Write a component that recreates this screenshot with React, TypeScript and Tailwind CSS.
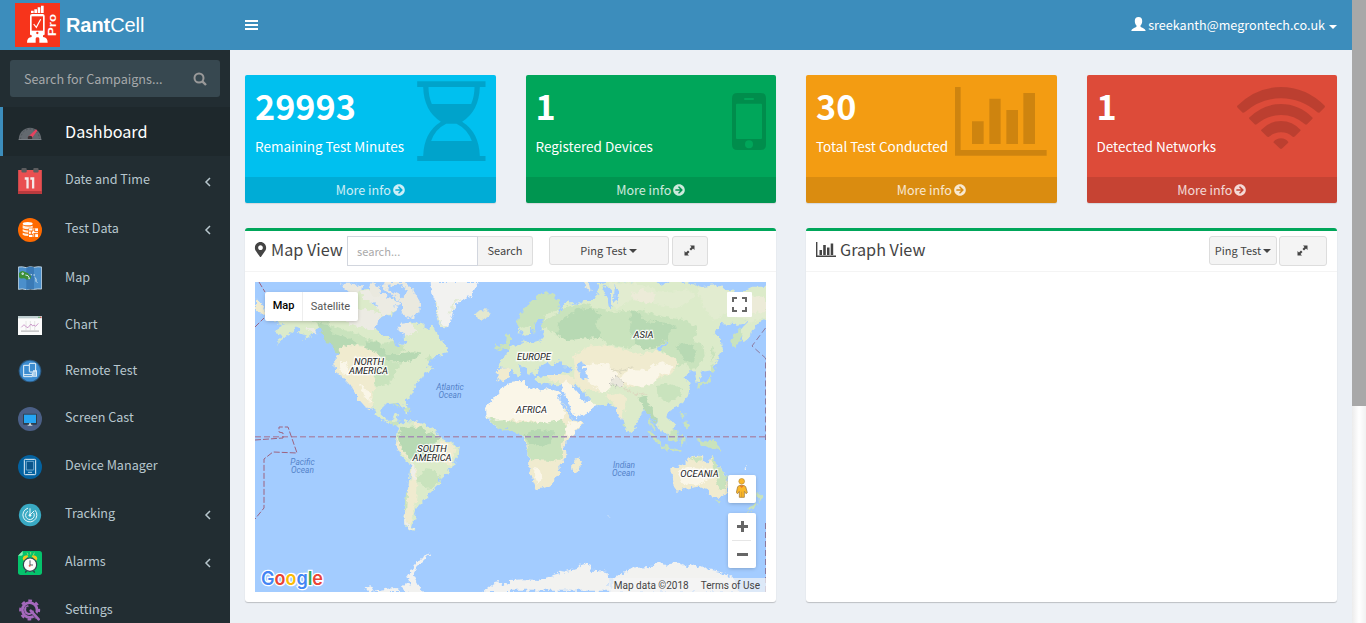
import type { ReactNode } from "react";
import { FaArrowCircleRight, FaMapMarkerAlt } from "react-icons/fa";

const sans = "font-['Noto_Sans_CJK_SC',sans-serif]";

/* ---------- sidebar icons ---------- */

const GaugeIcon = () => (
  <svg width="24" height="14" viewBox="54 384 72 42">
    <path d="M56 422a34 36 0 0 1 68 0z" fill="#63696f" />
    <path d="M62 420a28 30 0 0 1 56 0" fill="none" stroke="#4c5257" strokeWidth="3" strokeDasharray="5 6" />
    <path d="M84 414l24-23 4 4-18 24z" fill="#e8425f" />
    <circle cx="90" cy="417" r="7" fill="#3a3235" />
    <path d="M56 420h68v3h-68z" fill="#7b8086" />
  </svg>
);
const CalendarIcon = () => (
  <svg width="24" height="26" viewBox="54 38 72 79">
    <path d="M54 44h72v73H54z" fill="#e94f51" />
    <path d="M54 108h72v9H54z" fill="#b93a3e" />
    <rect x="64" y="38" width="16" height="14" rx="3" fill="#5d5d5f" />
    <rect x="100" y="38" width="16" height="14" rx="3" fill="#5d5d5f" />
    <path d="M74 66h12v34h-7V74h-5zM91 66h12v34h-7V74h-5z" fill="#f4e8e8" />
  </svg>
);
const DataIcon = () => (
  <svg width="24" height="24" viewBox="54 189 72 72">
    <circle cx="90" cy="225" r="36" fill="#ff6a00" />
    <ellipse cx="83" cy="206" rx="15" ry="5" fill="#fff" />
    <path d="M68 211q14 7 30 1v6H86v5q-12 0-18-3zM68 223q8 4 17 3v7q-12 0-17-4zM68 233q8 4 17 3v7q-12 0-17-4z" fill="#ffeede" />
    <path d="M87 220h27v26H87z" fill="#fff" />
    <path d="M87 228h12v-8M104 220v10h10M87 238h12v8M94 228v10M104 236v10M100 236h14" fill="none" stroke="#ff6a00" strokeWidth="3" />
  </svg>
);
const MapIcon = () => (
  <svg width="24" height="24" viewBox="54 333 72 72">
    <path d="M55 336q12-2 24 2 12-5 23-1 12-3 23-1v66q-12-1-23 1-12-3-23 1-12-4-24-1z" fill="#4b8fcb" stroke="#b9cfdf" strokeWidth="3" />
    <path d="M79 338q12-5 23-1v66q-12-3-23 1z" fill="#3a7ab6" />
    <path d="M57 354q8-9 17-4l10 5q4 8 10 8l-3 9q-6 2-12 2-4-5-10-4-9 2-12-4z" fill="#3d8f37" />
    <path d="M66 354h4v4h-4zM76 360l8 2 5 9h-4M92 358l4 2M100 360h5M104 367l4 4v8l4 4" fill="none" stroke="#d5e7ee" strokeWidth="3" />
  </svg>
);
const ChartIcon = () => (
  <svg width="24" height="19" viewBox="54 483 72 57">
    <path d="M54 483h72v57H54z" fill="#fbfbfb" />
    <path d="M54 483h72v7H54z" fill="#bfced0" />
    <path d="M115 485h4v4h-4z" fill="#58a55a" />
    <path d="M120 485h4v4h-4z" fill="#d95b50" />
    <path d="M78 498v28M91 498v28M104 498v28" stroke="#d9d9d9" strokeWidth="2" />
    <path d="M63 526h54v5H63z" fill="#c9c9cb" />
    <path d="M64 517l8-8 7 7 5 2 9-11 5 6 4-3 5 4 8-9" fill="none" stroke="#c58bc4" strokeWidth="2.5" />
  </svg>
);
const RemoteIcon = () => (
  <svg width="24" height="26" viewBox="54 609 72 78">
    <circle cx="90" cy="648" r="34" fill="#2c5c86" />
    <circle cx="90" cy="648" r="31" fill="#3c8cd0" />
    <g fill="none" stroke="#e9f4fb" strokeWidth="3">
      <path d="M87 631H71v34h26v-12M71 659h26" />
      <rect x="88" y="625" width="19" height="26" rx="2" />
    </g>
    <path d="M99 646h6v-5h3v5h3v19h-12z" fill="#dcecf8" />
    <path d="M102 650v13M106 650v13" stroke="#3c8cd0" strokeWidth="1.5" />
  </svg>
);
const CastIcon = () => (
  <svg width="24" height="24" viewBox="54 51 72 72">
    <circle cx="90" cy="87" r="36" fill="#4b5f86" />
    <rect x="69" y="71" width="42" height="33" rx="3" fill="#2f3d4b" />
    <path d="M72 74h36v25H72z" fill="#25a4f2" />
    <path d="M87 100h6v5h-6zM83 104h14v3H83z" fill="#c9d3d8" />
  </svg>
);
const DeviceIcon = () => (
  <svg width="24" height="24" viewBox="54 195 72 72">
    <circle cx="90" cy="231" r="36" fill="#0462a0" />
    <rect x="73" y="208" width="34" height="46" rx="3" fill="none" stroke="#e8f2f8" strokeWidth="3" />
    <path d="M79 214h22v26H79z" fill="#0b558a" stroke="#7db4d8" strokeWidth="2.5" />
    <path d="M84 247h12" stroke="#a7cbe2" strokeWidth="3" />
  </svg>
);
const RadarIcon = () => (
  <svg width="24" height="24" viewBox="54 339 72 72">
    <circle cx="90" cy="375" r="33.5" fill="#39a9c3" />
    <g fill="none" stroke="#eaf8fb" strokeWidth="3">
      <path d="M90 355v20l12-12" />
      <path d="M84 354.500a21 21 0 1 0 21 6" />
      <path d="M84 364a13 13 0 1 0 17 5" />
    </g>
    <circle cx="90" cy="376" r="4" fill="#eaf8fb" />
  </svg>
);
const AlarmIcon = () => (
  <svg width="24" height="24" viewBox="54 483 72 72">
    <path d="M68 483h50q8 0 8 8v56q0 8-8 8H62q-8 0-8-8v-50z" fill="#05c36c" />
    <path d="M54 497l14-14v10q0 4-4 4z" fill="#8df0b4" />
    <path d="M81 488l3 7M92 486v8M103 488l-3 7" stroke="#9be36d" strokeWidth="2.500" />
    <path d="M68 506q2-10 14-10l3 3-14 13zM112 506q-2-10-14-10l-3 3 14 13z" fill="#f7c41e" />
    <path d="M80 541l-4 7M100 541l4 7" stroke="#2f3e4a" strokeWidth="4" />
    <circle cx="90" cy="524" r="20" fill="#fafafa" stroke="#33424e" strokeWidth="3.500" />
    <path d="M90 511v14h9" fill="none" stroke="#33424e" strokeWidth="2.500" />
    <circle cx="89" cy="527" r="3" fill="#e05a4a" />
  </svg>
);
const GearIcon = () => (
  <svg width="24" height="24" viewBox="54 628 72 72">
    <circle cx="89" cy="661" r="22" fill="none" stroke="#a569bd" strokeWidth="8" />
    <circle cx="89" cy="661" r="28" fill="none" stroke="#a569bd" strokeWidth="7" strokeDasharray="11 11" strokeDashoffset="5" />
    <path d="M92 661l28 30" stroke="#222d32" strokeWidth="13" />
    <path d="M92 663l24 26" stroke="#a569bd" strokeWidth="8" strokeLinecap="round" />
    <path d="M85 649a12 12 0 1 0 14 14" fill="none" stroke="#a569bd" strokeWidth="6" />
    <path d="M87 660l-7-8" stroke="#222d32" strokeWidth="4" />
  </svg>
);

/* ---------- small glyphs ---------- */

const Caret = () => <span className="inline-block border-x-4 border-t-4 border-x-transparent border-t-current" />;

const AngleLeft = () => (
  <svg width="7" height="10" viewBox="0 0 7 10" className="absolute top-1/2 left-[204px] -mt-[4px]">
    <path d="M6 1L2 5l4 4" fill="none" stroke="#b8c7ce" strokeWidth="1.500" />
  </svg>
);

const ExpandIcon = () => (
  <svg width="11" height="11" viewBox="0 0 11 11" fill="currentColor">
    <path d="M6 .5h4.500V5L9 3.500 7 5.500 5.500 4 7.500 2z" />
    <path d="M5 10.500H.5V6L2 7.500l2-2L5.500 7l-2 2z" />
  </svg>
);

const Logo = () => (
  <svg width="45" height="44" viewBox="45 9 135 132">
    <path d="M45 9h135v132H45z" fill="#f7341b" />
    <g fill="#fff">
      <path d="M93 32h8v7h-8zM103 28h8v11h-8zM113 22h8v17h-8zM123 17h8v22h-8z" />
      <path d="M96 42h32q6 0 6 6v55q0 3-5 3v5q14 1 14 17H118v-12q0-4-5.500-4t-5.500 4v12H81q0-16 14-17v-5q-5 0-5-3V48q0-6 6-6z" />
    </g>
    <path d="M95 49h34v43H95z" fill="#f7341b" />
    <circle cx="112" cy="99" r="3.500" fill="#f7341b" />
    <path d="M101 72l8 10 13-24" fill="none" stroke="#fff" strokeWidth="3.500" />
    <text transform="translate(167 108) rotate(-90)" fontSize="34" fontWeight="700" fill="#fff" textLength="66" lengthAdjust="spacingAndGlyphs" fontFamily="Liberation Sans, sans-serif">Pro</text>
  </svg>
);

/* ---------- sidebar ---------- */

type Item = { label: string; icon: ReactNode; height: string; nudge: string; lift: string; arrow?: boolean };

const items: Item[] = [
  { label: "Date and Time", icon: <CalendarIcon />, height: "h-[49px]", nudge: "mt-[1px]", lift: "-mt-[3px]", arrow: true },
  { label: "Test Data", icon: <DataIcon />, height: "h-12", nudge: "mt-[2px]", lift: "-mt-[3px]", arrow: true },
  { label: "Map", icon: <MapIcon />, height: "h-12", nudge: "mt-[2px]", lift: "-mt-px" },
  { label: "Chart", icon: <ChartIcon />, height: "h-[46px]", nudge: "mt-[3px]", lift: "-mt-px" },
  { label: "Remote Test", icon: <RemoteIcon />, height: "h-[47px]", nudge: "mt-[1px]", lift: "-mt-px" },
  { label: "Screen Cast", icon: <CastIcon />, height: "h-12", nudge: "mt-[2px]", lift: "-mt-[3px]" },
  { label: "Device Manager", icon: <DeviceIcon />, height: "h-12", nudge: "mt-[2px]", lift: "-mt-[3px]" },
  { label: "Tracking", icon: <RadarIcon />, height: "h-12", nudge: "mt-[2px]", lift: "-mt-[3px]", arrow: true },
  { label: "Alarms", icon: <AlarmIcon />, height: "h-12", nudge: "mt-[2px]", lift: "-mt-[3px]", arrow: true },
  { label: "Settings", icon: <GearIcon />, height: "h-12", nudge: "mt-[2px]", lift: "-mt-[3px]" },
];

function Sidebar() {
  return (
    <aside className="w-[230px] shrink-0 bg-[#222d32] text-[#b8c7ce]">
      <div className="mx-[10px] mt-[10px] mb-[10px] flex h-[37px] items-center justify-between rounded-[3px] bg-[#374850] pr-[13px] pl-[14px] text-[#a6a9ab]">
        <span className="text-[12.600px] leading-5">Search for Campaigns...</span>
        <svg width="14" height="14" viewBox="0 0 14 14" fill="none" stroke="#999" strokeWidth="2">
          <circle cx="6" cy="6" r="4.500" />
          <path d="M9.300 9.300L13 13" strokeWidth="2.400" />
        </svg>
      </div>
      <div className="flex h-[49px] items-center border-l-[3px] border-[#3c8dbc] bg-[#1e282c] pl-[15px] text-white">
        <span className="mt-[4px] w-[47px]"><GaugeIcon /></span>
        <span className="-mt-[2px] text-[16.200px] leading-6">Dashboard</span>
      </div>
      {items.map((it) => (
        <div key={it.label} className={`relative flex items-center pl-[18px] ${it.height}`}>
          <span className={`w-[47px] ${it.nudge}`}>{it.icon}</span>
          <span className={`text-[12.600px] leading-5 ${it.lift}`}>{it.label}</span>
          {it.arrow && <AngleLeft />}
        </div>
      ))}
    </aside>
  );
}

/* ---------- stat boxes ---------- */

const Hourglass = () => (
  <svg width="69" height="81" viewBox="531 48 206 243" className="absolute top-[6px] right-[10px]" fill="#000" fillOpacity=".15">
    <path fillRule="evenodd" d="M531 49h205v17h-17q-2 72-53 104 51 32 53 103h17v15H531v-15h18q2-71 53-103-51-32-53-104h-18zM565 66q0 27 10 51h118q10-24 10-51zM573 228h122q-13-36-46-52h-31q-33 16-45 52z" />
  </svg>
);
const Phone = () => (
  <svg width="34" height="57" viewBox="636 84 102 171" className="absolute top-[18px] right-[10px]" fill="#000" fillOpacity=".15">
    <path fillRule="evenodd" d="M652 84h70q16 0 16 16v139q0 16-16 16h-70q-16 0-16-16V100q0-16 16-16zM675 99q-3 0-3 3t3 3h24q3 0 3-3t-3-3zM651 116q-3 0-3 3v100q0 3 3 3h72q3 0 3-3V119q0-3-3-3zM687 226a12 12 0 1 0 0 24 12 12 0 1 0 0-24z" />
  </svg>
);
const Bars = () => (
  <svg width="92" height="69" viewBox="465 66 276 207" className="absolute top-[12px] right-[10px]" fill="#000" fillOpacity=".15">
    <path d="M465 66h17v189h258v17H465zM516 169h35v68h-35zM568 101h34v136h-34zM619 135h35v102h-35zM670 84h35v153h-35z" />
  </svg>
);
const Wifi = () => (
  <svg width="88" height="62" viewBox="472 261 264 186" className="absolute top-[12px] right-[12px]" fill="#000" fillOpacity=".15">
    <path d="M472 318q57-57 132-57t132 57q0 3-2 5l-15 15q-3 1-6-1-49-42-109-42t-109 42q-3 2-6 1l-15-15q-2-2-2-5z" />
    <path d="M508 353q42-41 96-41t95 41q0 3-2 5l-15 15q-3 2-6 0-32-28-72-28t-73 28q-3 2-6 0l-15-15q-2-2-2-5z" />
    <path d="M544 390q25-27 60-27t59 27q0 2-2 4l-15 15q-4 3-7 1-15-13-35-13t-36 13q-3 2-7-1l-15-15q-2-2-2-4z" />
    <path d="M581 426q9-11 23-11t22 11q0 2-2 4l-16 15q-4 4-8 0l-16-15q-2-2-3-4z" />
  </svg>
);

const stats = [
  { value: "29993", label: "Remaining Test Minutes", bg: "bg-[#00c0ef]", art: <Hourglass /> },
  { value: "1", label: "Registered Devices", bg: "bg-[#00a65a]", art: <Phone /> },
  { value: "30", label: "Total Test Conducted", bg: "bg-[#f39c12]", art: <Bars /> },
  { value: "1", label: "Detected Networks", bg: "bg-[#dd4b39]", art: <Wifi /> },
];

function Stats() {
  return (
    <div className="grid grid-cols-4">
      {stats.map((s) => (
        <div key={s.label} className="px-[15px]">
          <div className={`relative flex h-32 flex-col overflow-hidden rounded-[2px] text-white shadow-[0_1px_1px_rgba(0,0,0,0.1)] ${s.bg}`}>
            {s.art}
            <div className="relative flex-1 px-[10px]">
              <div className="pt-[9px] text-[34.200px] leading-[42px] font-bold">{s.value}</div>
              <div className="mt-[10px] text-[13.500px] leading-5">{s.label}</div>
            </div>
            <div className="flex h-[26px] items-center justify-center gap-[2px] bg-black/10 text-white/80">
              <span className="text-[12.600px] leading-5">More info</span>
              <FaArrowCircleRight size={12} />
            </div>
          </div>
        </div>
      ))}
    </div>
  );
}

/* ---------- world map ---------- */

const land = "#dcebca";
const sand = "#f0ebcf";
const pale = "#faf6e8";
const forest = "#b7d9b3";
const green = "#c9e3bd";
const ice = "#f2f2f0";

function WorldMap() {
  return (
    <svg width="511" height="310" viewBox="0 0 511 310" className="block bg-[#a3ccff]">
      <defs>
        {/* roughens the coastlines and vegetation edges */}
        <filter id="coast" filterUnits="userSpaceOnUse" x="0" y="0" width="511" height="310">
          <feTurbulence type="fractalNoise" baseFrequency="0.2" numOctaves="3" seed="4" result="noise" />
          <feDisplacementMap in="SourceGraphic" in2="noise" scale="7" xChannelSelector="R" yChannelSelector="G" />
        </filter>
      </defs>
      <g filter="url(#coast)">
      {/* western hemisphere */}
      <g transform="translate(-5 -4) scale(.33333)">
        <path d="M15 62l22 18 8 24-10 8-20-14z" fill={sand} />
        <path d="M72 132l20-24 60-20 90-10 60-34 60-14 40 40 30-10 8 40-20 14 6 22-10 20 8 18 20 8 14 22 8-4-2-32 12-10-4-24 40 0 14 14 8 6 12-14 12 24 12 20 18 16 8 24-38 12-20 8-10 16 14 4 8 10-26 14-22 30-10 14-2 12-22 22 4 26 4 14-6 2-12-28-22-4-28 2-14 14 2 22 12 14 16 0 8-18 16-2-8 20 4 10 16 2 4 20 16 10 10-2 8 6-6 6-16-6-18-14-22-20-34-10-22-20-10-22-22-34-16-22 2 14 22 38 4 10-18-20-20-38-18-28 0-52 4-20-20-20-10-28-14-16-16-14-22 0-16-8-18 12-16 16-14 8 6-16-20-8-6-14z" fill={land} />
        <path d="M178 140l20-20 30-2 14 24 40 14 38 10 30 18 46 10 44-2 30 22-30 16-20 20-16 24-10 22-22-14-6-30 0-44-60-10-36-28-14 18-16-4-20-40-32-14z" fill={green} />
        <path d="M200 130l30 8 20 30 42 10 34 20-40 6-22 30-16-30-20-12-20-40zM350 190l38 6 24 32 46 0 28-8 34 4-36 24-30 6-32-6-44-16-38-14z" fill={forest} />
        <path d="M290 200l50 6 44 20 16 30-18 30-10 50-8 24 4 36-22-10-20-22-24-40-24-26-22-10-4-44 14-16 4-16z" fill={sand} />
        <path d="M270 252l16 0 12 34-8 12-14-16zM330 320l18 14 14 20-4 18-18-18z" fill={pale} />
        <path d="M380 250l44 0 30 8-20 30-20 30-34 6-10-30z" fill={green} />
        <path d="M290 100l60-8 40 14 6 30-10 20-50-6-38-10-20-20zM330 40l50-10 30 26 40 14-10 24-40 24-30-44-30-10zM450 140l30-4 18 24-30 14-20-14z" fill="#ecebe3" />
        <path d="M404 12l60 0 26 24 20 36-2 32-20 16-36-12 6-20-14-26-26-14-20-18zM365 12l24 14 2 26-20 6-14-30zM270 14l40 0 20 20-6 14-40-10zM325 22l14 0-2 16-14 0z" fill="#eae9df" />
        <path d="M284 108l10-10 16 6-4 14-16 6zM256 84l20-6 10 6-20 12zM410 24l16 20 30 14 18-16-20-24M430 84l18 8 18-4M366 70l12 14 10-4M390 30l10 24M348 112l12-10" fill="#a3ccff" />
        <path d="M376 150q6-30 30-38l16-4 14 22 0 32 16 16-2 28-14-2-8-22-20-10-24-6z" fill="#a3ccff" />
        <path d="M542 12h144l-20 40-32 16-16 14-10 26-14 44-14-6-14-22-8-20 0-32-10-22z" fill={ice} />
        <path d="M556 76l8 12-4 22 10 28 18 12M598 110l14-36 20-12" fill="none" stroke="#e2ebd6" strokeWidth="6" />
        <path d="M678 106l12-10 24 2 8 12-22 14-16-4z" fill="#e3e8cf" />
        <path d="M528 242l16-14 8 16-14 4zM420 376l20 4 20 10-18-4zM462 392l20 0 2 6-18 0z" fill={green} />
        <path d="M74 160l40-24 38 0-22 24-28 20-22 18 16-24z" fill={land} />
        <path d="M165 150l30 0 10 20-12-4-12-8z" fill="#ecebe3" />
        <path d="M450 442L464 430 486 430 516 434 530 446 562 460 572 476 602 494 630 506 624 528 614 544 606 572 590 585 570 600 566 620 545 640 532 655 522 665 508 680 497 692 492 708 497 716 486 734 484 744 499 758 480 757 464 740 460 715 468 700 466 670 476 620 481 562 460 545 448 520 438 492 443 465z" fill={land} />
        <path d="M452 446l30 4 30-6 20 18 34 14-12 26-10 50-26-6-20-4-18 2-16-22-16-14-4-30z" fill={forest} />
        <path d="M500 600l24-26 34 2 14 26-20 24-22 4-16-6z" fill={green} />
        <path d="M574 486l44 20-6 26-10 30-22-10-10-36zM484 560l16 10 2 60-4 44-10 26-4 32-14 8-8-24 8-46 8-60zM442 480l12 30 22 30-6 4-26-32-6-18zM495 430l18 4-6 12-12-4z" fill={sand} />
        <path d="M480 556l16 12 2 34-10 4zM463 710l8 26 20 18-10 2-18-20z" fill="#efeee9" />
        <path d="M468 640l6 0-2 60-6 0z" fill={green} />
        <path d="M440 428l10-2-4 12-16 4-14-12 4-2 12 6z" fill={green} />
        <path d="M780 166l-12 4-2 24-28 26 24-6 18-6zM742 196l-10 20 18-6z" fill={green} />
        <path d="M780 270l-36 2-2 34 20 4 18-10z" fill={sand} />
        <path d="M780 314l-24 16-28 34-20 26 2 30 24 22 46 10z" fill={pale} />
        <path d="M710 416l24 12 46-2v28l-24 0-26-16z" fill={green} />
        <path d="M544 826l-20 18-20 20-14 24 10 20 20 36h-50l-14-14 8-14 18 4-8-30 16-24 28-32zM344 930l20-6 10 18-20 2zM376 936l60-6 20 12h-80zM700 942l32-26 20-4 4 12 24-10v28z" fill={ice} />
      </g>
      {/* eastern hemisphere */}
      <g transform="translate(255 -4) scale(.33333)">
        <path d="M0 208l20-8 22-4-4-16 10 14 22 2 20-6 12-14-4-20-24 6 6-24 10-20-10-10-20 30 0 30-12 6-18-12-6-8 0-26 22-24 30-34 26-10 30 14 16 20-10 18 16-6 10-30 20-4 12 10 28-16 30 0 12-22 0-24 24-10 80 0 66-4 20 18 40-20 60 16 50 18 30-10 50 18 40-20 60 0v90l-36 16-20 22-8 20-20 18-10-20 6-24 16-16-36 6-44-2-20 30 18 14 4 36-30 60-34 6-2 30-10 4-6-36-16 0-16 22 20 12-10 46-30 26-24 12-6 20 24 22-8 26-28 2-14-20-4-12-14-20-22-26-12 18-34 60-22-38-8-24-20-22-18-4-26 2-16 0-20-16-10-30-22-14-14-14-26 4-10 10-26-2-42-6 0-16 28-4 46-10-22-20-22-8-24 10-10 28-20-8-16-20-14-4 8 24-12 14-18-26-40-8z" fill={land} />
        <path d="M22 126l30-46 34-30 24-8 28 14 14 20-8 20-34 12-20 30-12 30-14-14-6-14-20 12-16-6z" fill={green} />
        <path d="M120 120l50-34 60-10 20 14 60 12 80-6 70 20 60 10 40 20-10 40-26 22 4 48-28 14-30-34-14-22-24-16-40-10-34 22-60-10-36-28-20-4-60 6-60-14-44-16-36-2z" fill={green} />
        <path d="M150 130l50-34 44-4 30 20-16 26 14 20 0 18-60 6-36 4-36-14zM362 96l26 8 20 26 60 4 30 10-20 20-10 22-30 22-36 6-34-30-10-26 4-26z" fill={forest} />
        <path d="M486 196l60-8 34 10 4 36-22 30-14 18-26-30-26-14-20-20zM440 322l40-6 34 14-4 26-34 18-34-20z" fill={green} />
        <path d="M496 202l40-4 24 20-10 30-20 6zM384 360l24-8 10 30 14 30 10 34-14-20-18-26-16-20z" fill={forest} />
        <path d="M300 16l80 0 60 16-20 46-60-14-40 30-30-40zM400 30l70 14 60-10 30 20-60 40-50-12-60-20zM560 30l60-10 60 30 88 10v60l-50 14-60-26-50 14-30-40z" fill="#e2ecd0" />
        <path d="M362 44l40-8 34 14-10 26-50-6zM706 66l50-14 12 10v40l-40 4z" fill="#ecebd8" />
        <path d="M190 234l40-28 56-4 60 14 40 14 50-12 52 20 20 18-22 30-46 16-30 22-60 4-40-20-30 24-10 14-30-14-20 6-20-20-8-24 2-30z" fill={sand} />
        <path d="M216 262l40-6 40 6 30 30-22 26 2 16-24 10-28-20-30-20z" fill={pale} />
        <path d="M330 292l34-20 40 4 50-26 38 14-10 18-40 12-10 22-40 10-40-8-24-14z" fill={pale} />
        <path d="M112 288l30 0 40 6 16 16-4 18-36-14-36-4zM284 350l40-6 24 14-2 24-12 50-18-40-8-30-20-4z" fill={sand} />
        <path d="M306 300l18-2 14 14-6 20-20-8-10-14z" fill="#e9e7dc" stroke="#aaa" strokeWidth="2" strokeDasharray="5 4" />
        <path d="M340 330l40 20 30-6M300 274l30 6 40-14" fill="none" stroke="#dcd9c0" strokeWidth="4" />
        <path d="M118 274l12-20 22-4 4 14 22 2 6 14-40 8-20-4zM204 256l14-6 6 12-6 8 12 12 0 24-16 2-4-20-8-20zM440 214l22-18 6-8 2 6-20 24zM286 20l20 20 0 40-8 16-6-34-12-26zM314 20l12 14-6 40-8-4M84 120l-8 16 0 36 10 6 6-12 0-30 6-16z" fill="#a3ccff" />
        <path d="M224 12l12 0 6 30-8-4-14-20z" fill="#e7ead8" />
        <path d="M664 184l20-30 12 6-6 28-16 26-8-12z" fill={green} />
        <path d="M604 204l10 20-8 30-4-14zM604 262l18 12-16 10-6-12zM602 288l4 20-12 10-36 12 2-8 26-10 14-16z" fill={green} />
        {/* africa and arabia */}
        <path d="M0 312L44 308 48 326 88 340 112 332 146 336 152 360 172 390 188 424 217 430 212 450 180 480 162 498 166 520 165 542 148 562 150 582 138 600 120 626 80 634 68 604 54 566 56 515 42 480 36 458 0 452z" fill={sand} />
        <path d="M0 312l44-4 4 18 40 14 24-8 34 4 6 20 12 30-4 40-60 10-30-6-70-4z" fill={pale} />
        <path d="M180 430l34 2-4 14-34 34-10-30z" fill={pale} />
        <path d="M0 434l40-2 60 4 50-10 20 24-6 24-12 24 8 20-2 26-34 6-40-4-28-6 0-34-14-36-42-10z" fill={green} />
        <path d="M42 466l40-10 50 4-10 38-40 4-26-8z" fill={forest} />
        <path d="M60 546l30 6 30 10 6 30-16 26-28 8-16-34z" fill={sand} />
        <path d="M74 570l16 4 4 30-10 14-12-30z" fill={pale} />
        <path d="M212 534l2 14-12 38-12 2-4-24 8-16z" fill={sand} />
        <path d="M154 314l16-6 30 34 18 20 20 2 16 18-10 16-44 20-12-10-14-38-20-32z" fill={pale} />
        <path d="M148 352l40 72-6 0-38-70zM204 344l20 14 16 0-6 14-16-2z" fill="#a3ccff" />
        {/* south-east asia and oceania */}
        <path d="M410 456l16 6 24 24 8 18-10-2-24-24zM452 502l30 6 34 10-4 4-60-12zM470 474l22-20 12-4 2 14-6 24-16 4-12-6zM512 470l12 6-2 28-10-4 0-20zM562 480l20 10 32-2 22 30-26-6-20-4-24-16zM512 396l12 14-4 14-8-10zM524 430l14 8-2 14-14-8zM416 420l14 20 8 18-6 0-14-20zM340 434l8 8-4 8-6-6z" fill={green} />
        <path d="M484 574l36-14 22-22 20-8 18 2-2 16 18 8 8-26 10 22 18 20 14 20 8 24-4 26-22 18-24-2-14-22-26-10-36 6-24 6-16-10z" fill={sand} />
        <path d="M500 580l40-14 40 6 20 30-40 18-40-4z" fill={pale} />
        <path d="M540 542l24-10 14 10-18 8zM604 532l16 26 20 26 12 20-6 26-8 10-20-20 8-20-20-30zM616 670l16 0-6 12zM746 640l12 18-10 14-6-16zM738 672l6 8-24 20-8-6z" fill={green} />
        <path d="M0 906l40-2 44 2 60-16 4-12 22 4 30-10 16-16 24 4 6 18 50 4 4 56H0zM300 942l8-34 30-26 40-12 50-4 14-14 20 8 40-4 30 8 20-6 40 16 50 10 40 28 6 30z" fill={ice} />
        <path d="M704 568h6v5h-6zM293 716h5v3h-5z" fill={ice} />
      </g>
      </g>
      {/* equator and date line */}
      <path d="M0 154.700h511" stroke="#a58db3" strokeWidth="1.600" strokeDasharray="6 3" />
      <path d="M0 158l28-2v-5l-4-1v-5h9l9 26-24-1-9 7v49l-9 11M4 0l6 10M0 45l9-9" fill="none" stroke="#9d637f" strokeWidth="1" strokeDasharray="6 2" />
      <path d="M510.500 46l-13.500 18 13.500 12v82M510.500 241v69" fill="none" stroke="#8d7a9f" strokeDasharray="6 3" />
      <g fontFamily="Roboto, sans-serif" fontStyle="italic" textAnchor="middle">
        <g fontSize="9.400" fill="#222" stroke="#fff" strokeOpacity=".85" strokeWidth="2.500" paintOrder="stroke">
          <text x="114" y="82.500">NORTH</text>
          <text x="113.500" y="91.500">AMERICA</text>
          <text x="177" y="169.500">SOUTH</text>
          <text x="177" y="179">AMERICA</text>
          <text x="279" y="78">EUROPE</text>
          <text x="388.500" y="56">ASIA</text>
          <text x="276.500" y="131">AFRICA</text>
          <text x="444.500" y="195">OCEANIA</text>
        </g>
        <g fontSize="8.300" fill="#5382c9">
          <text x="195" y="108">Atlantic</text>
          <text x="195" y="116">Ocean</text>
          <text x="47.500" y="183">Pacific</text>
          <text x="47.500" y="191">Ocean</text>
          <text x="369" y="186">Indian</text>
          <text x="368.500" y="194">Ocean</text>
        </g>
      </g>
    </svg>
  );
}

function MapCanvas() {
  return (
    <div className="relative h-[310px] w-[511px] overflow-hidden font-['Roboto',sans-serif]">
      <WorldMap />
      <div className="absolute top-[10px] left-[10px] flex h-[29px] items-center rounded-[2px] bg-white text-[11px] shadow-[0_1px_4px_-1px_rgba(0,0,0,0.3)]">
        <span className="flex h-full w-[38px] items-center justify-center border-r border-[#eee] font-medium text-black">Map</span>
        <span className="w-[55px] pt-[2px] text-center text-[#565656]">Satellite</span>
      </div>
      <div className="absolute top-[10px] right-[14px] flex h-[25px] w-[25px] items-center justify-center rounded-[1px] bg-white">
        <svg width="15" height="15" viewBox="0 0 15 15" fill="none" stroke="#666" strokeWidth="2">
          <path d="M1 5V1h4M10 1h4v4M14 10v4h-4M5 14H1v-4" />
        </svg>
      </div>
      <div className="absolute top-[193px] right-[10px] flex h-7 w-7 items-center justify-center rounded-[2px] bg-white pb-[2px] shadow-[0_1px_4px_-1px_rgba(0,0,0,0.3)]">
        <svg width="12" height="20" viewBox="679 601 36 60">
          <path d="M684 627q3-4 12-4t12 4l5 18-4 3-5-7v18H689v-18l-5 7-4-3z" fill="#fbb829" stroke="#a88242" strokeWidth="2.500" />
          <circle cx="696" cy="611" r="8.500" fill="#fbb829" stroke="#b58a3a" strokeWidth="2" />
          <path d="M690 624l6 7 6-7z" fill="#e8762c" />
          <path d="M696 642v17" stroke="#c98d2a" strokeWidth="2" />
        </svg>
      </div>
      <div className="absolute top-[231px] right-[10px] flex h-[55px] w-7 flex-col items-center rounded-[2px] bg-white shadow-[0_1px_4px_-1px_rgba(0,0,0,0.3)]">
        <svg width="28" height="55" viewBox="0 0 28 55">
          <path d="M9 13.500h11M14.500 8v11M9 41.500h11" stroke="#666" strokeWidth="3" />
          <path d="M4 27.500h19" stroke="#e6e6e6" />
        </svg>
      </div>
      <svg width="68" height="24" viewBox="0 0 68 24" className="absolute bottom-[1px] left-[5px]">
        <text x="1" y="17.500" fontFamily="Inter, sans-serif" fontSize="18.500" fontWeight="600" stroke="#fff" strokeWidth="2.500" paintOrder="stroke" textLength="62" lengthAdjust="spacingAndGlyphs">
          <tspan fill="#4285f4">G</tspan><tspan fill="#ea4335">o</tspan><tspan fill="#fbbc05">o</tspan><tspan fill="#4285f4">g</tspan><tspan fill="#34a853">l</tspan><tspan fill="#ea4335">e</tspan>
        </text>
      </svg>
      <div className="absolute right-0 bottom-0 flex h-[14px] items-center bg-[#f5f5f5]/70 pr-[6px] pl-[5px] text-[10px] text-[#444]">
        <span className="w-[87px] whitespace-nowrap">Map data ©2018</span>
        <span className="whitespace-nowrap">Terms of Use</span>
      </div>
    </div>
  );
}

/* ---------- panels ---------- */

const button = "flex items-center justify-center rounded-[3px] border border-[#ddd] bg-[#f4f4f4] text-[11px] text-[#444]";

function Panel({ header, children }: { header: ReactNode; children?: ReactNode }) {
  return (
    <section className="mx-[15px] h-[374px] rounded-[3px] border-t-[3px] border-[#00a65a] bg-white shadow-[0_1px_1px_rgba(0,0,0,0.2)]">
      <div className="flex h-[41px] items-start border-b border-[#f4f4f4] px-[10px] pt-[5px] text-[#444]">{header}</div>
      {children}
    </section>
  );
}

export default function App() {
  return (
    <div className={`flex h-[623px] w-[1366px] overflow-hidden bg-[#ecf0f5] ${sans}`}>
      <div className="flex w-[1352px] flex-col">
        <header className="flex h-[50px] shrink-0 items-center bg-[#3c8dbc] text-white">
          <div className="flex w-[230px] items-center gap-[6px] pl-[15px] font-['Liberation_Sans',sans-serif] text-[20px]">
            <Logo />
            <span className="tracking-[-0.080px]"><b>Rant</b>Cell</span>
          </div>
          <svg width="13" height="10" viewBox="0 0 13 10" className="ml-[15px]">
            <path d="M0 1h13M0 5h13M0 9h13" stroke="#fff" strokeWidth="2" />
          </svg>
          <div className="ml-auto flex items-center pr-[15px] text-[12.600px] leading-5">
            <svg width="15" height="15" viewBox="0 0 15 15" fill="#fff" className="mr-[2px] -mt-[2px]">
              <path d="M7.500 0C10 0 11.200 1.500 11.200 4c0 2-.8 3.600-1.700 4.500v1.300c1 1 4.700 1.600 5.200 4.200H.3c.5-2.600 4.200-3.200 5.200-4.200V8.500C4.600 7.600 3.800 6 3.800 4 3.800 1.500 5 0 7.500 0z" />
            </svg>
            <span className="mr-[4px]">sreekanth@megrontech.co.uk</span>
            <span className="mt-[3px] flex"><Caret /></span>
          </div>
        </header>
        <div className="flex min-h-0 flex-1">
          <Sidebar />
          <main className="w-[1122px] pt-[25px]">
            <Stats />
            <div className="mt-[25px] grid grid-cols-2">
              <Panel
                header={
                  <>
                    <FaMapMarkerAlt size={15} className="mt-[6px] -ml-[2px]" />
                    <span className="ml-[3px] w-[76px] text-[16.200px] leading-[26px] whitespace-nowrap">Map View</span>
                    <div className="flex h-[30px] w-[131px] items-center border border-[#d2d6de] pl-[9px] text-[11.100px] text-[#aaa]">search...</div>
                    <div className={`${button} h-[30px] w-[55px] rounded-l-none border-l-0 pb-[2px]`}>Search</div>
                    <div className={`${button} ml-4 h-[29px] w-[120px] gap-[2px] pr-px`}>Ping Test<Caret /></div>
                    <div className={`${button} ml-[3px] h-[30px] w-[36px] pr-px pb-px`}><ExpandIcon /></div>
                  </>
                }
              >
                <div className="p-[10px]"><MapCanvas /></div>
              </Panel>
              <Panel
                header={
                  <>
                    <svg width="20" height="15" viewBox="0 0 20 15" fill="#444" className="mt-[6px]">
                      <path d="M0 0h1.400v13.600H20V15H0zM3.500 8h2.500v5H3.500zM7.200 3h2.600v10H7.200zM11 5.500h2.500V13H11zM14.700 1.500h2.500V13h-2.500z" />
                    </svg>
                    <span className="ml-[4px] text-[16.200px] leading-[26px] whitespace-nowrap">Graph View</span>
                    <div className={`${button} ml-auto h-[29px] w-[68px] gap-[2px]`}>Ping Test<Caret /></div>
                    <div className={`${button} ml-[2px] h-[30px] w-[48px] pr-px pb-px`}><ExpandIcon /></div>
                  </>
                }
              />
            </div>
          </main>
        </div>
      </div>
      <div className="w-[14px] bg-gradient-to-r from-[#ececec] via-white to-[#f1f1f1]">
        <div className="h-[406px] bg-[#a8a8a8]" />
      </div>
    </div>
  );
}
